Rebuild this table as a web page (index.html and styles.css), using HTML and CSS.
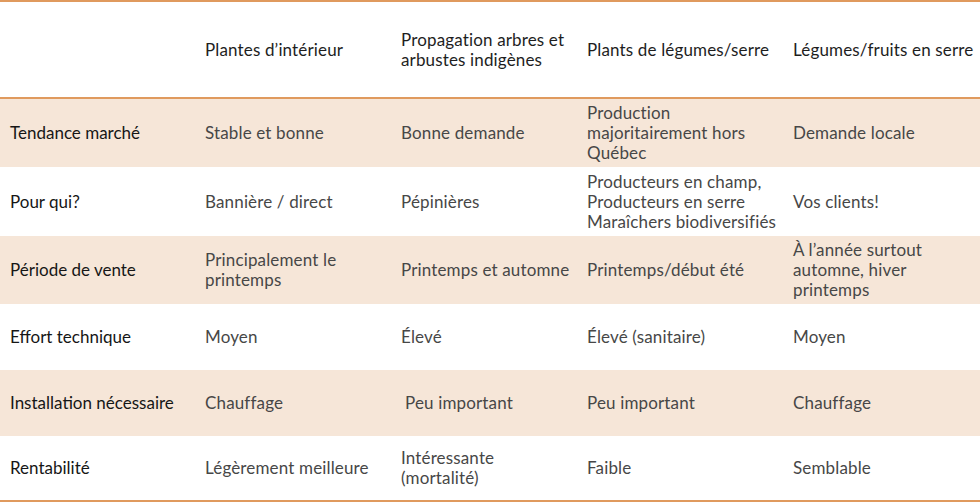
FILE: index.html
```html
<!DOCTYPE html>
<html lang="fr">
<head>
<meta charset="utf-8">
<link rel="stylesheet" href="styles.css">
</head>
<body>
<table class="grid">
  <colgroup>
    <col class="c1"><col class="c2"><col class="c3"><col class="c4"><col class="c5">
  </colgroup>
  <thead>
    <tr class="head">
      <th></th>
      <th>Plantes d’intérieur</th>
      <th>Propagation arbres et<br>arbustes indigènes</th>
      <th>Plants de légumes/serre</th>
      <th>Légumes/fruits en serre</th>
    </tr>
  </thead>
  <tbody>
    <tr class="shade r1">
      <td class="label">Tendance marché</td>
      <td>Stable et bonne</td>
      <td>Bonne demande</td>
      <td>Production<br>majoritairement hors<br>Québec</td>
      <td>Demande locale</td>
    </tr>
    <tr class="r2">
      <td class="label">Pour qui?</td>
      <td>Bannière / direct</td>
      <td>Pépinières</td>
      <td>Producteurs en champ,<br>Producteurs en serre<br>Maraîchers biodiversifiés</td>
      <td>Vos clients!</td>
    </tr>
    <tr class="shade r3">
      <td class="label">Période de vente</td>
      <td>Principalement le<br>printemps</td>
      <td>Printemps et automne</td>
      <td>Printemps/début été</td>
      <td>À l’année surtout<br>automne, hiver<br>printemps</td>
    </tr>
    <tr class="r4">
      <td class="label">Effort technique</td>
      <td>Moyen</td>
      <td>Élevé</td>
      <td>Élevé (sanitaire)</td>
      <td>Moyen</td>
    </tr>
    <tr class="shade r5">
      <td class="label">Installation nécessaire</td>
      <td>Chauffage</td>
      <td class="indent">Peu important</td>
      <td>Peu important</td>
      <td>Chauffage</td>
    </tr>
    <tr class="r6">
      <td class="label">Rentabilité</td>
      <td>Légèrement meilleure</td>
      <td>Intéressante<br>(mortalité)</td>
      <td>Faible</td>
      <td>Semblable</td>
    </tr>
  </tbody>
</table>
</body>
</html>
```
FILE: styles.css
```css
html, body {
  margin: 0;
  padding: 0;
  background: #ffffff;
}
.grid {
  width: 980px;
  table-layout: fixed;
  border-collapse: collapse;
  font-family: "Lato", "Open Sans", sans-serif;
  font-size: 17px;
  line-height: 20px;
  letter-spacing: 0.15px;
  color: #474747;
  border-top: 2px solid #e09a5e;
  border-bottom: 2px solid #e09a5e;
}
.c1 { width: 195px; }
.c2 { width: 196px; }
.c3 { width: 186px; }
.c4 { width: 206px; }
.c5 { width: 197px; }
th, td {
  padding: 0 0 0 10px;
  text-align: left;
  vertical-align: middle;
  font-weight: 400;
}
th {
  color: #1e1e1e;
}
.head {
  height: 97px;
  border-bottom: 2px solid #e09a5e;
}
.shade { background: #f6e6d8; }
.r1 { height: 69px; }
.r2 { height: 69px; }
.r3 { height: 68px; }
.r4 { height: 66px; }
.r5 { height: 66px; }
.r6 { height: 65px; }
.label {
  color: #161616;
  letter-spacing: 0;
}
.indent { padding-left: 14px; }
```
